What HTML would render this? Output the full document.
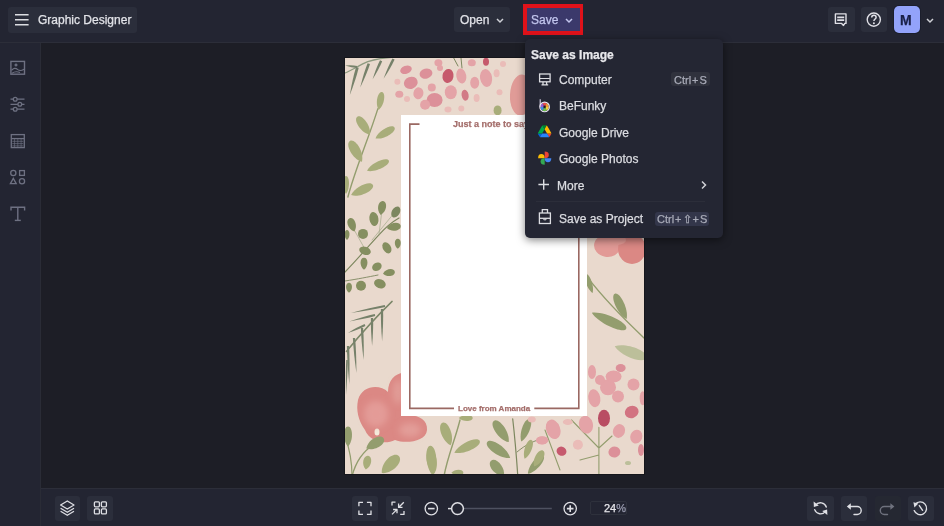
<!DOCTYPE html>
<html><head><meta charset="utf-8">
<style>
*{margin:0;padding:0;box-sizing:border-box}
html,body{width:944px;height:526px;overflow:hidden;background:#1d1e26;font-family:"Liberation Sans",sans-serif;color:#e4e4ea}
.abs{position:absolute}
#hdr{left:0;top:0;width:944px;height:42px;background:#232532}
#hdrline{left:0;top:42px;width:944px;height:1px;background:#2c2e39}
#side{left:0;top:43px;width:40px;height:483px;background:#232532}
#sideline{left:40px;top:43px;width:1px;height:483px;background:#2a2c36}
#bot{left:41px;top:489px;width:903px;height:37px;background:#232532}
#botline{left:41px;top:488px;width:903px;height:1px;background:#2c2e39}
.btn{position:absolute;background:#2b2e3b;border-radius:3px}
.t{position:absolute;white-space:nowrap;line-height:1;will-change:transform;-webkit-text-stroke:0.25px currentColor}
svg{position:absolute;overflow:visible}
</style></head><body>
<div id="hdr" class="abs"></div>
<div id="hdrline" class="abs"></div>
<div id="side" class="abs"></div>
<div id="sideline" class="abs"></div>
<div id="bot" class="abs"></div>
<div id="botline" class="abs"></div>

<!-- header left -->
<div class="btn" style="left:8px;top:7px;width:129px;height:26px"></div>
<svg style="left:0;top:0" width="40" height="40" viewBox="0 0 40 40"><path d="M15 14.7H28.6M15 19.7H28.6M15 24.7H28.6" stroke="#dcdde2" stroke-width="1.6" fill="none"/></svg>
<div class="t" style="left:38px;top:14px;font-size:12px;color:#e2e3e8">Graphic Designer</div>

<!-- header center -->
<div class="btn" style="left:454px;top:7px;width:56px;height:25px"></div>
<div class="t" style="left:460px;top:14px;font-size:12px;color:#e2e3e8">Open</div>
<svg style="left:496px;top:18px" width="8" height="5" viewBox="0 0 8 5"><path d="M1 1L4 4L7 1" fill="none" stroke="#cfd0d6" stroke-width="1.5"/></svg>

<div class="abs" style="left:523px;top:4px;width:60px;height:31px;background:#e0121a"></div>
<div class="abs" style="left:527px;top:8px;width:53px;height:22.5px;background:#3b396b"></div>
<div class="t" style="left:531px;top:14px;font-size:12px;color:#c3c6ee">Save</div>
<svg style="left:565px;top:18px" width="8" height="5" viewBox="0 0 8 5"><path d="M1 1L4 4L7 1" fill="none" stroke="#c3c6ee" stroke-width="1.5"/></svg>

<!-- header right -->
<div class="btn" style="left:828px;top:7px;width:27px;height:25px"></div>
<div class="btn" style="left:861px;top:7px;width:26px;height:25px"></div>
<div class="abs" style="left:894px;top:6px;width:26px;height:27px;background:#93a3fa;border-radius:5px;box-shadow:0 0 0 1px #1b1e2c"></div>
<div class="t" style="left:900px;top:13px;font-size:14px;font-weight:bold;color:#1a2048">M</div>
<svg style="left:926px;top:18px" width="8" height="5" viewBox="0 0 8 5"><path d="M1 1L4 4L7 1" fill="none" stroke="#cfd0d6" stroke-width="1.5"/></svg>


<!-- sidebar icons -->
<svg style="left:0;top:0" width="41" height="240" viewBox="0 0 41 240">
<g fill="none" stroke="#6e7182" stroke-width="1.4">
<rect x="10.9" y="61.4" width="13.6" height="12.8"/>
<circle cx="16" cy="65" r="1.1" fill="#6e7182" stroke-width="1"/>
<path d="M11.5 70.3 C13.5 68 15.5 67.6 17.8 69.6 C19.8 71.2 21.8 70.6 24 69.2" stroke-width="1.2"/>
<path d="M12 73.2 C14.5 71.5 17 71.3 20 72.6" stroke-width="1.1"/>
<path d="M10.5 99.2H24.5M10.5 104.3H24.5M10.5 109.2H24.5" stroke-width="1.2"/>
</g>
<g fill="#232532" stroke="#6e7182" stroke-width="1.3">
<circle cx="15.2" cy="99.2" r="1.9"/>
<circle cx="19.8" cy="104.3" r="1.9"/>
<circle cx="15.2" cy="109.2" r="1.9"/>
</g>
<g fill="none" stroke="#6e7182" stroke-width="1.3">
<rect x="11.3" y="134.6" width="13" height="13"/>
<path d="M11.3 138.6H24.3"/>
<path d="M12.3 141.3H23.3M12.3 143.6H23.3M12.3 145.9H23.3" stroke-width="0.7"/>
<path d="M14.5 139V147M17.8 139V147M21.1 139V147" stroke-width="0.6"/>
<circle cx="13.3" cy="173" r="2.6"/>
<rect x="19.6" y="170.6" width="4.8" height="4.8"/>
<path d="M13.3 178.4L16.2 183.6H10.4Z"/>
<circle cx="22" cy="181.2" r="2.6"/>
</g>
<g fill="none" stroke="#6e7182" stroke-width="1.4">
<path d="M11 210.5V207.3H24.6V210.5"/>
<path d="M17.8 207.3V220.4"/>
<path d="M14.8 220.4H20.8"/>
</g>
</svg>

<!-- header right icons -->
<svg style="left:826px;top:4px" width="64" height="32" viewBox="826 4 64 32">
<g fill="none" stroke="#e0e0e6" stroke-width="1.4" stroke-linejoin="round">
<path d="M835.4 13.9H846V23.4H844.8L843.5 25.4L841.6 23.4H835.4Z"/>
<path d="M837.2 17.4H844.2M837.2 20.1H844.2" stroke-width="1.7"/>
<circle cx="873.8" cy="19.6" r="6.6" stroke-width="1.4"/>
<path d="M871.7 17.6C871.7 16.2 872.7 15.3 873.9 15.3C875.2 15.3 876.1 16.2 876.1 17.4C876.1 18.9 873.9 19.2 873.9 21.1" stroke-width="1.5"/>
</g>
<circle cx="873.9" cy="23.3" r="1" fill="#e0e0e6"/>
</svg>

<!-- bottom toolbar -->
<div class="btn" style="left:55px;top:496px;width:25px;height:25px"></div>
<div class="btn" style="left:87px;top:496px;width:26px;height:25px"></div>
<div class="btn" style="left:352px;top:496px;width:26px;height:25px"></div>
<div class="btn" style="left:386px;top:496px;width:25px;height:25px"></div>
<div class="btn" style="left:807px;top:496px;width:27px;height:25px"></div>
<div class="btn" style="left:841px;top:496px;width:26px;height:25px"></div>
<div class="btn" style="left:875px;top:496px;width:26px;height:25px;background:#252832"></div>
<div class="btn" style="left:908px;top:496px;width:26px;height:25px"></div>
<div class="abs" style="left:590px;top:501px;width:37px;height:14px;border:1px solid #2e313c;border-radius:2px"></div>
<div class="t" style="left:604px;top:503px;font-size:11px;color:#e6e6ea">24<span style="color:#9a9cb0">%</span></div>
<svg style="left:0;top:480px" width="944" height="46" viewBox="0 480 944 46">
<g fill="none" stroke="#dedfe4" stroke-width="1.3" stroke-linejoin="round">
<!-- layers -->
<path d="M67.3 501L74 505L67.3 509L60.6 505Z"/>
<path d="M60.6 508.3L67.3 512.3L74 508.3"/>
<path d="M60.6 511.3L67.3 515.3L74 511.3"/>
<!-- grid -->
<rect x="94.4" y="501.8" width="5" height="5" rx="1"/>
<rect x="101.4" y="501.8" width="5" height="5" rx="1"/>
<rect x="94.4" y="508.9" width="5" height="5" rx="1"/>
<rect x="101.4" y="508.9" width="5" height="5" rx="1"/>
<!-- fullscreen -->
<path d="M358.9 506.2V502.3H363M366.9 502.3H371V506.2M371 510.5V514.4H366.9M363 514.4H358.9V510.5"/>
<!-- fit -->
<path d="M392 505.5V502.2H395.5M400.2 514.4H404V511"/>
<path d="M403.8 502.2L398.8 507.2M398.6 503.5V507.4H402.5"/>
<path d="M392 514.4L396.8 509.6M393.1 509.5H397V513.3"/>
<!-- zoom out -->
<circle cx="431.3" cy="508.6" r="6.2"/>
<path d="M428 508.6H434.6" stroke-width="1.6"/>
<!-- plus -->
<circle cx="570.2" cy="508.6" r="6.2"/>
<path d="M566.9 508.6H573.5M570.2 505.3V511.9" stroke-width="1.6"/>
</g>
<path d="M464 508.5H551.8" stroke="#4e5160" stroke-width="1.6"/>
<path d="M448 508.6H452" stroke="#dedfe4" stroke-width="1.5"/>
<circle cx="457.5" cy="508.6" r="5.9" fill="#232532" stroke="#dedfe4" stroke-width="1.5"/>
<g fill="none" stroke="#dedfe4" stroke-width="1.4" stroke-linecap="round" stroke-linejoin="round">
<!-- refresh -->
<path d="M815.5 505.2A6.2 6.2 0 0 1 826.3 507"/>
<path d="M825.5 511.4A6.2 6.2 0 0 1 814.7 509.6"/>
<!-- undo -->
<path d="M850 506.5H857.2A4 4 0 0 1 857.2 514.5H854"/>
<!-- history -->
<path d="M915.2 504.3A6.4 6.4 0 1 1 914.2 510.6"/>
<path d="M919.3 505.6L922.6 510.3"/>
</g>
<g fill="none" stroke="#6f727e" stroke-width="1.4" stroke-linecap="round" stroke-linejoin="round">
<path d="M891 506.5H884.3A4 4 0 0 0 884.3 514.5H887.5"/>
</g>
<path d="M846.8 506.5L850.8 503.3V509.7Z" fill="#dedfe4"/>
<path d="M894.4 506.5L890.4 503.3V509.7Z" fill="#6f727e"/>
<path d="M913.4 502.2L918.4 503.6L914.4 507.4Z" fill="#dedfe4"/>
<path d="M813.6 501.6L818.8 505.6L813.9 507Z" fill="#dedfe4"/>
<path d="M827.4 515L822.2 511L827.1 509.6Z" fill="#dedfe4"/>
</svg>

<!-- design -->
<div class="abs" style="left:345px;top:58px;width:299px;height:416px;background:#e9d9cd;box-shadow:0 0 0 1px #15161b"></div>
<svg style="left:345px;top:58px" width="299" height="416" viewBox="345 58 299 416"><defs><filter id="soft" x="-5%" y="-5%" width="110%" height="110%"><feGaussianBlur stdDeviation="0.7"/></filter><filter id="soft2" x="-50%" y="-50%" width="200%" height="200%"><feGaussianBlur stdDeviation="3"/></filter><clipPath id="dc"><rect x="345" y="58" width="299" height="416"/></clipPath></defs><g clip-path="url(#dc)"><g filter="url(#soft)">
<path d="M453.7 58 L458 66 M461 58 L462 68" fill="none" stroke="#7d875f" stroke-width="1" stroke-linecap="round"/>
<path d="M347.9 197 C355 170 368 140 377.9 108.6" fill="none" stroke="#939d6e" stroke-width="1.4" stroke-linecap="round"/>
<path d="M345 73 C352 70 360 65 367.8 61.7 C376 59 386 57.5 394.4 57" fill="none" stroke="#8e9a80" stroke-width="1.3" stroke-linecap="round"/>
<path d="M345 272 C355 262 365 250 378.9 234.9 C385 228 392 222 399 218" fill="none" stroke="#7d875f" stroke-width="1.2" stroke-linecap="round"/>
<path d="M345 281 C358 279 368 277 378 275" fill="none" stroke="#7d875f" stroke-width="0.9" stroke-linecap="round"/>
<path d="M378.9 234.9 L382 210 M366 251 L352 226 M372 240 L395 212" fill="none" stroke="#a3a98a" stroke-width="0.7" stroke-linecap="round"/>
<path d="M346.4 351.4 C360 335 378 315 392.1 301.4" fill="none" stroke="#7b8668" stroke-width="1.5" stroke-linecap="round"/>
<path d="M358 400 C362 385 380 384 388 392 C388 380 396 372 405 373 L405 416 C415 414 428 418 427 430 C426 442 405 444 395 440 C385 445 370 442 365 430 C358 420 356 410 358 400Z" fill="#db8884"/>
<path d="M352 476 C356 462 362 452 375 443.5" fill="none" stroke="#939d6e" stroke-width="1.4" stroke-linecap="round"/>
<path d="M345 436 C350 450 352 462 352 476" fill="none" stroke="#939d6e" stroke-width="1.2" stroke-linecap="round"/>
<path d="M444 476 C448 455 455 440 460 420" fill="none" stroke="#939d6e" stroke-width="1.4" stroke-linecap="round"/>
<path d="M517.8 476 C516 450 514 430 512.7 418.8" fill="none" stroke="#7d875f" stroke-width="1.2" stroke-linecap="round"/>
<path d="M517 452 C525 445 535 440 545 438" fill="none" stroke="#7d875f" stroke-width="0.9" stroke-linecap="round"/>
<path d="M598.9 476 L598.9 427.4 M598.9 448 L571.5 420 M598.9 455 L580 460 M598.9 448 L612 436 M545 430 L560 470" fill="none" stroke="#939d6e" stroke-width="1.1" stroke-linecap="round"/>
<path d="M587.9 277.9 C605 300 625 320 644 337.9" fill="none" stroke="#939d6e" stroke-width="1.4" stroke-linecap="round"/>
<path d="M356.1 67.1Q352.7 78.0 349.8 95.0Q356.0 78.9 358.7 67.7Z" fill="#76816a"/>
<path d="M367.6 63.2Q363.8 72.5 360.2 87.4Q366.9 73.7 370.0 64.0Z" fill="#76816a"/>
<path d="M380.0 60.3Q376.3 67.5 372.6 79.3Q379.1 68.9 382.2 61.3Z" fill="#76816a"/>
<path d="M392.4 58.4Q388.1 66.2 383.5 78.8Q390.9 67.6 394.6 59.4Z" fill="#76816a"/>
<path d="M357.1 65.9Q352.4 65.0 345.0 65.5Q352.0 67.8 356.9 68.1Z" fill="#76816a"/>
<path d="M380.9 309.0Q380.6 322.0 382.1 341.4Q383.5 322.0 383.1 309.0Z" fill="#76816a"/>
<path d="M370.9 318.0Q370.6 329.1 372.1 345.7Q373.5 329.1 373.1 318.0Z" fill="#76816a"/>
<path d="M360.9 328.1Q361.2 340.9 363.6 360.0Q364.1 340.7 363.1 327.9Z" fill="#76816a"/>
<path d="M352.9 338.1Q353.5 352.1 356.4 372.9Q356.4 351.9 355.1 337.9Z" fill="#76816a"/>
<path d="M346.9 346.0Q347.1 361.4 349.3 384.3Q349.9 361.3 349.1 346.0Z" fill="#76816a"/>
<path d="M384.8 305.0Q371.0 307.5 350.7 312.9Q371.5 310.0 385.2 307.0Z" fill="#76816a"/>
<path d="M374.8 314.0Q364.4 316.3 349.3 321.4Q365.0 318.8 375.2 316.0Z" fill="#76816a"/>
<path d="M364.6 324.1Q357.6 327.0 347.9 332.9Q358.7 329.3 365.4 325.9Z" fill="#76816a"/>
<path d="M346.2 360.0Q345.6 374.0 346.0 395.0Q347.6 374.0 347.8 360.0Z" fill="#76816a"/>
<ellipse cx="406" cy="69.8" rx="6" ry="4" fill="#dc9099" transform="rotate(-20 406 69.8)"/>
<ellipse cx="426" cy="73.6" rx="6.5" ry="5" fill="#dc9099" transform="rotate(-15 426 73.6)"/>
<ellipse cx="448" cy="76" rx="5.5" ry="7" fill="#c65a6c" transform="rotate(10 448 76)"/>
<ellipse cx="438.4" cy="62.8" rx="4" ry="3.5" fill="#e4a3a7"/>
<ellipse cx="461.3" cy="76" rx="5" ry="7.5" fill="#e4a3a7" transform="rotate(-10 461.3 76)"/>
<ellipse cx="410.8" cy="82.8" rx="7" ry="6" fill="#dc9099" transform="rotate(-20 410.8 82.8)"/>
<ellipse cx="397.4" cy="81.8" rx="3" ry="3" fill="#eabcb8"/>
<ellipse cx="418.4" cy="93.3" rx="5" ry="6" fill="#e4a3a7" transform="rotate(10 418.4 93.3)"/>
<ellipse cx="399.3" cy="94.2" rx="4" ry="3.5" fill="#e4a3a7"/>
<ellipse cx="431.8" cy="87.6" rx="4" ry="4" fill="#e4a3a7"/>
<ellipse cx="434.6" cy="100" rx="8" ry="7" fill="#dc9099"/>
<ellipse cx="425.1" cy="104.7" rx="5" ry="5" fill="#e4a3a7"/>
<ellipse cx="450.8" cy="92.3" rx="6" ry="7" fill="#e4a3a7"/>
<ellipse cx="465.1" cy="95.2" rx="3.5" ry="5.5" fill="#d27a86" transform="rotate(-10 465.1 95.2)"/>
<ellipse cx="474.7" cy="82.8" rx="4.5" ry="6" fill="#e4a3a7"/>
<ellipse cx="486.1" cy="78" rx="6" ry="9" fill="#e4a3a7" transform="rotate(-10 486.1 78)"/>
<ellipse cx="471.8" cy="62.8" rx="4" ry="3.5" fill="#e4a3a7"/>
<ellipse cx="486" cy="61.8" rx="3" ry="4" fill="#c65a6c"/>
<ellipse cx="496.6" cy="73.3" rx="3" ry="4" fill="#eabcb8"/>
<ellipse cx="476.6" cy="98" rx="3" ry="4" fill="#eabcb8"/>
<ellipse cx="499.5" cy="92.3" rx="3" ry="3" fill="#eabcb8"/>
<ellipse cx="448" cy="109.5" rx="3.5" ry="3" fill="#eabcb8"/>
<ellipse cx="461.3" cy="108.5" rx="3" ry="3" fill="#eabcb8"/>
<ellipse cx="407" cy="99" rx="3" ry="3" fill="#eabcb8"/>
<ellipse cx="440" cy="68" rx="3" ry="3" fill="#e4a3a7"/>
<ellipse cx="521" cy="95" rx="11" ry="20.5" fill="#e09b97" transform="rotate(3 521 95)"/>
<ellipse cx="503" cy="64" rx="3" ry="3" fill="#eabcb8"/>
<path d="M378.7 109.9C384.6 105.4 386.0 92.9 381.9 92.1C377.8 91.4 374.7 103.7 378.7 109.9Z" fill="#a8ad7a"/>
<ellipse cx="497.6" cy="110.4" rx="4" ry="5" fill="#a8ad7a"/>
<path d="M369.9 134.7C371.4 125.6 361.7 113.6 357.3 116.7C352.9 119.8 360.8 133.0 369.9 134.7Z" fill="#a8ad7a"/>
<path d="M375.5 138.4C384.1 140.1 396.9 131.5 394.5 127.4C392.2 123.3 378.3 130.1 375.5 138.4Z" fill="#a8ad7a"/>
<path d="M361.9 161.8C364.5 152.0 355.0 138.0 349.9 141.0C344.8 144.0 352.1 159.2 361.9 161.8Z" fill="#a8ad7a"/>
<path d="M367.0 170.8C376.0 172.9 390.8 164.9 388.8 160.6C386.8 156.3 371.1 162.5 367.0 170.8Z" fill="#a8ad7a"/>
<path d="M351.1 195.1C360.4 197.9 375.1 189.8 372.9 184.9C370.6 180.1 354.9 186.2 351.1 195.1Z" fill="#a8ad7a"/>
<path d="M346.0 194.0C350.3 188.6 349.6 176.0 346.0 176.0C342.4 176.0 341.7 188.6 346.0 194.0Z" fill="#a8ad7a"/>
<path d="M380.7 214.9C387.1 211.8 387.8 201.9 383.1 201.1C378.4 200.3 375.8 209.8 380.7 214.9Z" fill="#858f60"/>
<ellipse cx="395.8" cy="212" rx="4" ry="6" fill="#7d875f" transform="rotate(30 395.8 212)"/>
<ellipse cx="373.9" cy="219" rx="4.5" ry="7" fill="#858f60" transform="rotate(-10 373.9 219)"/>
<path d="M354.4 231.5C358.4 225.6 354.1 216.7 349.6 218.3C345.1 219.9 347.6 229.5 354.4 231.5Z" fill="#858f60"/>
<path d="M386.9 228.1C392.0 233.0 401.5 230.4 400.7 225.7C399.9 221.0 390.0 221.7 386.9 228.1Z" fill="#858f60"/>
<ellipse cx="363" cy="233.9" rx="5" ry="5" fill="#858f60"/>
<path d="M347.0 239.9C350.6 236.9 350.0 229.9 347.0 229.9C344.0 229.9 343.4 236.9 347.0 239.9Z" fill="#858f60"/>
<ellipse cx="386.9" cy="247.8" rx="4" ry="6" fill="#858f60" transform="rotate(-30 386.9 247.8)"/>
<ellipse cx="365" cy="250.8" rx="6" ry="4" fill="#858f60" transform="rotate(20 365 250.8)"/>
<path d="M397.8 248.8C402.1 245.8 401.4 238.8 397.8 238.8C394.2 238.8 393.5 245.8 397.8 248.8Z" fill="#858f60"/>
<path d="M364.0 269.8C369.0 266.2 368.2 257.8 364.0 257.8C359.8 257.8 359.0 266.2 364.0 269.8Z" fill="#858f60"/>
<ellipse cx="376.9" cy="266.8" rx="5" ry="4" fill="#858f60" transform="rotate(-30 376.9 266.8)"/>
<path d="M383.0 273.7C387.4 278.1 395.5 275.8 394.8 271.7C394.1 267.6 385.7 268.2 383.0 273.7Z" fill="#858f60"/>
<ellipse cx="361" cy="285.7" rx="5" ry="5" fill="#858f60"/>
<ellipse cx="379.9" cy="283.7" rx="6" ry="4.5" fill="#858f60" transform="rotate(20 379.9 283.7)"/>
<path d="M349.0 292.7C353.3 289.7 352.6 282.7 349.0 282.7C345.4 282.7 344.7 289.7 349.0 292.7Z" fill="#858f60"/>
<ellipse cx="377" cy="432" rx="2.5" ry="3.5" fill="#f4ebdc"/>
<path d="M366.3 448.5C375.1 451.7 386.6 443.6 383.7 438.5C380.7 433.4 367.9 439.3 366.3 448.5Z" fill="#939d6e"/>
<path d="M365.8 469.5C372.2 466.4 372.9 456.5 368.2 455.7C363.5 454.9 360.9 464.4 365.8 469.5Z" fill="#a8ad7a"/>
<path d="M381.8 473.1C393.0 474.1 403.8 461.2 398.8 456.1C393.7 451.1 380.8 461.9 381.8 473.1Z" fill="#a8ad7a"/>
<path d="M348.0 446.4C353.8 440.4 352.8 426.4 348.0 426.4C343.2 426.4 342.2 440.4 348.0 446.4Z" fill="#939d6e"/>
<path d="M432.9 475.5C439.3 466.0 436.2 445.1 430.3 445.7C424.4 446.2 425.0 467.2 432.9 475.5Z" fill="#a8ad7a"/>
<path d="M450.7 445.3C455.0 436.1 448.1 420.7 442.5 422.7C436.9 424.8 441.5 441.0 450.7 445.3Z" fill="#a8ad7a"/>
<path d="M454.3 452.7C464.7 455.0 481.9 445.7 479.7 440.9C477.4 436.0 459.2 443.3 454.3 452.7Z" fill="#a8ad7a"/>
<path d="M434.1 473.8C439.9 465.5 435.8 449.2 429.9 450.2C424.1 451.2 425.8 468.0 434.1 473.8Z" fill="#a8ad7a"/>
<path d="M451.4 472.8C455.0 477.1 463.4 476.4 463.4 472.8C463.4 469.2 455.0 468.5 451.4 472.8Z" fill="#a8ad7a"/>
<path d="M458.7 418.0C462.9 422.3 472.7 421.6 472.7 418.0C472.7 414.4 462.9 413.7 458.7 418.0Z" fill="#a8ad7a"/>
<path d="M508.8 442.1C510.2 431.6 498.7 417.4 493.8 420.9C489.0 424.3 498.4 439.9 508.8 442.1Z" fill="#939d6e"/>
<path d="M510.2 458.0C507.4 447.3 490.6 437.1 487.2 442.0C483.8 446.8 499.2 459.1 510.2 458.0Z" fill="#939d6e"/>
<path d="M503.9 476.1C505.6 466.8 495.6 456.9 491.1 460.7C486.5 464.6 494.6 476.1 503.9 476.1Z" fill="#939d6e"/>
<path d="M521.3 441.6C529.2 436.8 534.0 420.6 529.5 419.0C525.0 417.4 518.4 432.8 521.3 441.6Z" fill="#939d6e"/>
<path d="M524.6 458.7C531.4 454.8 535.3 441.3 531.4 439.9C527.5 438.5 521.9 451.3 524.6 458.7Z" fill="#a8ad7a"/>
<path d="M527.9 473.8C536.9 472.0 547.0 458.5 543.3 455.4C539.7 452.4 528.1 464.6 527.9 473.8Z" fill="#939d6e"/>
<ellipse cx="531.8" cy="419.4" rx="4" ry="3" fill="#eabcb8"/>
<ellipse cx="542" cy="440.4" rx="6" ry="4" fill="#e4a3a7"/>
<ellipse cx="594.3" cy="398.2" rx="6" ry="9" fill="#e4a3a7" transform="rotate(-10 594.3 398.2)"/>
<ellipse cx="608" cy="387.3" rx="8" ry="8" fill="#e4a3a7"/>
<ellipse cx="618" cy="396.4" rx="6" ry="6" fill="#e4a3a7"/>
<ellipse cx="633.5" cy="384.6" rx="6" ry="6" fill="#e4a3a7"/>
<ellipse cx="642.7" cy="398.2" rx="3" ry="7" fill="#e4a3a7"/>
<ellipse cx="631.7" cy="412" rx="7" ry="6" fill="#d27381" transform="rotate(-20 631.7 412)"/>
<ellipse cx="604" cy="418.3" rx="6" ry="8.5" fill="#b94d63"/>
<ellipse cx="586" cy="424.7" rx="7" ry="9" fill="#e4a3a7" transform="rotate(-15 586 424.7)"/>
<ellipse cx="619" cy="431" rx="6" ry="7" fill="#e4a3a7" transform="rotate(20 619 431)"/>
<ellipse cx="636.3" cy="436.6" rx="6" ry="7" fill="#e4a3a7" transform="rotate(20 636.3 436.6)"/>
<ellipse cx="577.9" cy="444.8" rx="5" ry="5" fill="#eabcb8"/>
<ellipse cx="561.5" cy="451.2" rx="5" ry="4.5" fill="#c65a6e" transform="rotate(20 561.5 451.2)"/>
<ellipse cx="614.4" cy="452" rx="6" ry="5.5" fill="#dc9099" transform="rotate(-20 614.4 452)"/>
<ellipse cx="553.2" cy="429.3" rx="7" ry="10" fill="#e4a3a7" transform="rotate(-20 553.2 429.3)"/>
<ellipse cx="567.8" cy="422" rx="5" ry="3" fill="#eabcb8"/>
<path d="M534.1 466.3C541.8 464.5 547.2 453.1 543.1 450.7C539.0 448.3 531.8 458.7 534.1 466.3Z" fill="#a8ad7a"/>
<ellipse cx="542.3" cy="440.2" rx="6" ry="4" fill="#e4a3a7"/>
<ellipse cx="641" cy="450" rx="3" ry="6" fill="#dc9099"/>
<ellipse cx="628" cy="463" rx="3" ry="2" fill="#bcbf9a"/>
<ellipse cx="607" cy="246" rx="13" ry="11" fill="#e29a96" transform="rotate(10 607 246)"/>
<ellipse cx="632" cy="249" rx="14" ry="15" fill="#db8884"/>
<ellipse cx="617" cy="240" rx="9" ry="5" fill="#e39b96"/>
<path d="M591.8 312.7C599.1 324.0 623.7 334.1 626.2 328.7C628.7 323.3 605.1 311.0 591.8 312.7Z" fill="#939d6e"/>
<path d="M626.6 319.1C628.9 308.7 619.6 291.5 614.8 293.7C609.9 296.0 617.2 314.2 626.6 319.1Z" fill="#939d6e"/>
<path d="M592.7 293.0C594.7 285.9 589.2 273.0 585.9 274.2C582.5 275.4 586.6 288.8 592.7 293.0Z" fill="#939d6e"/>
<path d="M614.7 346.2C621.6 357.1 644.4 364.0 646.7 357.8C648.9 351.7 627.0 342.2 614.7 346.2Z" fill="#bcbf9a"/>
<ellipse cx="592" cy="372" rx="4" ry="7" fill="#e4a3a7"/>
<ellipse cx="613.6" cy="376.4" rx="8" ry="6" fill="#e4a3a7"/>
<ellipse cx="620.7" cy="368" rx="5" ry="4" fill="#dc9099"/>
<ellipse cx="600" cy="380" rx="5" ry="5" fill="#e4a3a7"/>
</g>
<g filter="url(#soft2)">
<ellipse cx="376" cy="414" rx="12" ry="13" fill="#e6a09c" opacity="0.8"/>
<ellipse cx="410" cy="430" rx="11" ry="7" fill="#e5a29e" opacity="0.8"/>
<ellipse cx="398" cy="392" rx="5" ry="12" fill="#e3a29c" opacity="0.8"/>
</g></g></svg>
<div class="abs" style="left:401px;top:115px;width:186px;height:301px;background:#fff"></div>
<svg style="left:401px;top:115px" width="186" height="301" viewBox="401 115 186 301"><path d="M419.5 124.1H409.8V408.4H454M534.3 408.4H578.8V124.1" fill="none" stroke="#9a6862" stroke-width="1.6"/></svg>
<div class="t" style="left:453px;top:120px;font-size:9px;font-weight:bold;color:#a46e6b">Just a note to say thanks</div>
<div class="t" style="left:458px;top:405px;font-size:8px;font-weight:bold;color:#a46e6b">Love from Amanda</div>

<!-- menu -->
<div class="abs" style="left:525px;top:39px;width:198px;height:199px;background:#242633;border-radius:5px;box-shadow:0 2px 8px rgba(0,0,0,.5)"></div>
<div class="t" style="left:531px;top:49px;font-size:12px;font-weight:bold;color:#e8e8ec">Save as Image</div>
<div class="t" style="left:559px;top:74px;font-size:12px;color:#dcdde2">Computer</div>
<div class="t" style="left:559px;top:100px;font-size:12px;color:#dcdde2">BeFunky</div>
<div class="t" style="left:559px;top:127px;font-size:12px;color:#dcdde2">Google Drive</div>
<div class="t" style="left:559px;top:153px;font-size:12px;color:#dcdde2">Google Photos</div>
<div class="t" style="left:557px;top:180px;font-size:12px;color:#dcdde2">More</div>
<div class="abs" style="left:536px;top:201px;width:169px;height:1px;background:#2c2e3a"></div>
<div class="t" style="left:559px;top:213px;font-size:12px;color:#dcdde2">Save as Project</div>

<svg style="left:530px;top:66px" width="30" height="165" viewBox="530 66 30 165">
<!-- computer -->
<g fill="none" stroke="#dcdde2" stroke-width="1.3">
<rect x="539.6" y="74" width="10.5" height="7.8"/>
<path d="M540 78.5H549.8" stroke-width="1"/>
<path d="M543 82V84.6M546.6 82V84.6M541.5 84.8H548.2"/>
</g>
<!-- befunky -->
<path d="M540.2 99.3V107" stroke="#d9d3e6" stroke-width="1.1" fill="none"/>
<path d="M544.6 106.9L542.45 103.18A4.3 4.3 0 0 1 546.75 103.18Z" fill="#e94b4b"/>
<path d="M544.6 106.9L546.75 103.18A4.3 4.3 0 0 1 548.90 106.90Z" fill="#f39a34"/>
<path d="M544.6 106.9L548.90 106.90A4.3 4.3 0 0 1 546.75 110.62Z" fill="#f2d03c"/>
<path d="M544.6 106.9L546.75 110.62A4.3 4.3 0 0 1 542.45 110.62Z" fill="#6cc04a"/>
<path d="M544.6 106.9L542.45 110.62A4.3 4.3 0 0 1 540.30 106.90Z" fill="#3d8fe0"/>
<path d="M544.6 106.9L540.30 106.90A4.3 4.3 0 0 1 542.45 103.18Z" fill="#9b5bd0"/>
<circle cx="544.6" cy="106.9" r="4.8" fill="none" stroke="#ece8f2" stroke-width="1.1"/>
<circle cx="544.6" cy="106.9" r="1.3" fill="#2a1f22"/>
<!-- google drive -->
<g transform="translate(537.9 125.3) scale(0.1535)">
<path d="m6.6 66.85 3.85 6.65c.8 1.4 1.95 2.5 3.3 3.3l13.75-23.8h-27.5c0 1.55.4 3.1 1.2 4.5z" fill="#0066da"/>
<path d="m43.65 25-13.75-23.8c-1.35.8-2.5 1.9-3.3 3.3l-25.4 44a9.06 9.06 0 0 0 -1.2 4.5h27.5z" fill="#00ac47"/>
<path d="m73.55 76.8c1.35-.8 2.5-1.9 3.3-3.3l1.6-2.75 7.65-13.25c.8-1.4 1.2-2.95 1.2-4.5h-27.502l5.852 11.5z" fill="#ea4335"/>
<path d="m43.65 25 13.75-23.8c-1.35-.8-2.9-1.2-4.5-1.2h-18.5c-1.6 0-3.15.45-4.5 1.2z" fill="#00832d"/>
<path d="m59.8 53h-32.3l-13.75 23.8c1.35.8 2.9 1.2 4.5 1.2h50.8c1.6 0 3.15-.45 4.5-1.2z" fill="#2684fc"/>
<path d="m73.4 26.5-12.7-22c-.8-1.4-1.95-2.5-3.3-3.3l-13.75 23.8 16.15 28h27.45c0-1.55-.4-3.1-1.2-4.5z" fill="#ffba00"/>
</g>
<!-- google photos -->
<path d="M544.7 158.2H538.1A3.30 4.09 0 0 1 544.7 158.2Z" fill="#fbbc04"/>
<path d="M544.7 158.2V151.6A3.30 4.09 90 0 1 544.7 158.2Z" fill="#ea4335"/>
<path d="M544.7 158.2H551.3A3.30 4.09 0 0 1 544.7 158.2Z" fill="#4285f4"/>
<path d="M544.7 158.2V164.8A3.30 4.09 90 0 1 544.7 158.2Z" fill="#34a853"/>
<!-- plus -->
<path d="M543.7 179.2V189.8M538.4 184.5H549" stroke="#dcdde2" stroke-width="1.4" fill="none"/>
<!-- briefcase -->
<g fill="none" stroke="#dcdde2" stroke-width="1.3">
<path d="M542.3 213V209.6H547.5V213"/>
<rect x="539.4" y="213" width="11" height="10.5"/>
<path d="M539.4 218.3H550.4"/>
<path d="M543.8 218.3V219.8H546V218.3" stroke-width="1"/>
</g>
</svg>
<!-- more chevron -->
<svg style="left:700px;top:180px" width="8" height="10" viewBox="0 0 8 10"><path d="M2 1.5L5.5 5L2 8.5" fill="none" stroke="#cfd0d6" stroke-width="1.5"/></svg>
<!-- shortcut badges -->
<div class="abs" style="left:671px;top:72px;width:39px;height:14px;background:#30323d;border-radius:3px"></div>
<div class="t" style="left:674px;top:75px;font-size:11px;color:#a9abb8">Ctrl<span style="margin:0 1px">+</span>S</div>
<div class="abs" style="left:655px;top:212px;width:54px;height:14px;background:#33364a;border-radius:3px"></div>
<div class="t" style="left:657px;top:214px;font-size:11px;color:#a9abb8">Ctrl<span style="margin:0 1px">+</span>⇧<span style="margin:0 1px">+</span>S</div>

</body></html>
